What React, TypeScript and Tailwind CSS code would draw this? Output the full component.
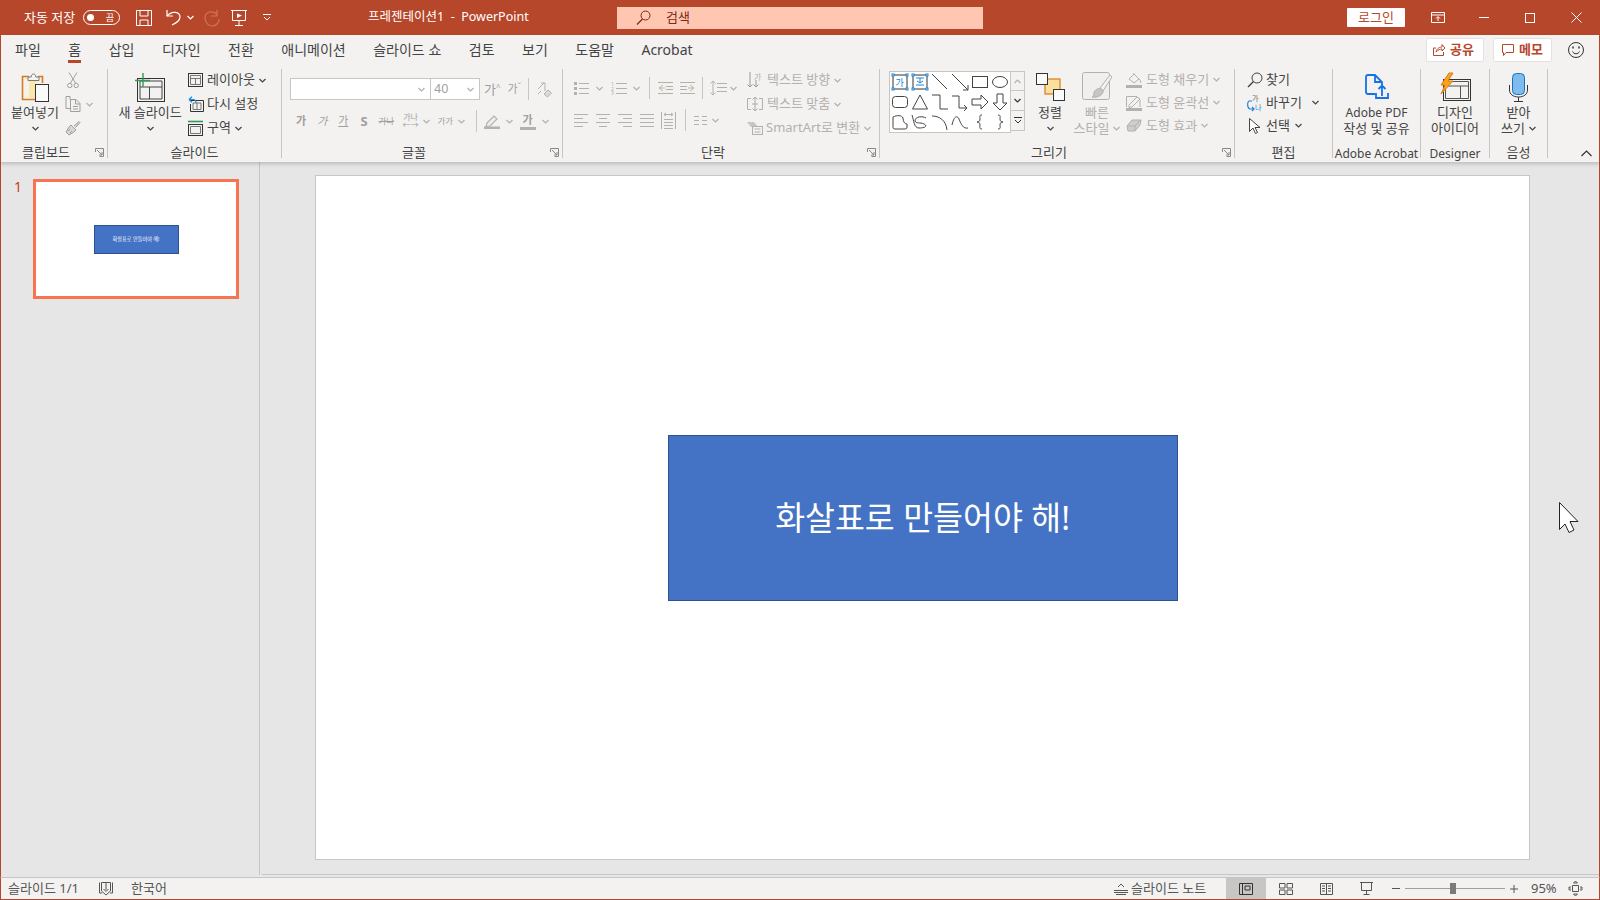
import React from "react";

const K = "#444444";
const D = "#b3b0ad";

type SP = { w: number; h: number; children?: React.ReactNode; s?: string; className?: string };
const S = ({ w, h, children, s = K, className }: SP) => (
  <svg width={w} height={h} viewBox={`0 0 ${w} ${h}`} fill="none" stroke={s} strokeWidth={1} className={`shrink-0 ${className ?? ""}`}>
    {children}
  </svg>
);

const Chev = ({ c = K, className = "" }: { c?: string; className?: string }) => (
  <svg width={7} height={5} viewBox="0 0 7 5" fill="none" stroke={c} strokeWidth={1.2} className={`shrink-0 ${className}`}>
    <path d="M.5 1 L3.5 4 L6.5 1" />
  </svg>
);

const Launcher = () => (
  <svg width={9} height={9} viewBox="0 0 9 9" fill="none" stroke="#8a8886" strokeWidth={1} className="absolute right-[3px] bottom-[1px]">
    <path d="M.5 4V.5H8.5V8.5H4.5M2 2L7 7M7 4V7H4" />
  </svg>
);

const isLatin = (t: string) => /^[A-Za-z ]+$/.test(t);

const Group = ({ w, label, launcher, children }: { w: string; label: string; launcher?: boolean; children?: React.ReactNode }) => (
  <div className={`${w} h-[89px] shrink-0 relative flex flex-col border-r border-[#c8c6c4]`}>
    <div className="h-[80px] flex items-start">{children}</div>
    <div className={`h-[12px] flex items-center justify-center leading-[14px] text-[#444444] whitespace-nowrap ${isLatin(label) ? "text-[12px] pt-[3px]" : "text-[13px]"} ${launcher ? "pr-[16px]" : ""}`}>{label}</div>
    {launcher && <Launcher />}
  </div>
);

const Big = ({ w, icon, lines, chev, off, chevLast }: { w: string; icon: React.ReactNode; lines: string[]; chev?: boolean; off?: boolean; chevLast?: boolean }) => {
  const c = off ? "text-[#b3b0ad]" : "text-[#444444]";
  return (
    <div className={`${w} shrink-0 flex flex-col items-center`}>
      <div className="h-[36px] flex items-center justify-center">{icon}</div>
      {lines.map((l, i) => (
        <div key={i} className={`h-[15.5px] leading-[15.5px] whitespace-nowrap flex items-center ${isLatin(l) ? "text-[12px]" : "text-[13px]"} ${c}`}>
          {l}
          {chevLast && i === lines.length - 1 && <Chev c={off ? D : K} className="ml-[4px]" />}
        </div>
      ))}
      {chev && (
        <div className="h-[16px] flex items-center">
          <Chev />
        </div>
      )}
    </div>
  );
};

const Row = ({ icon, text, off, chev, h = "h-[24px]", gap = "mr-[4px]", chevGap = "ml-[4px]", iw = "w-[15px]" }: { icon?: React.ReactNode; text: string; off?: boolean; chev?: boolean; h?: string; gap?: string; chevGap?: string; iw?: string }) => (
  <div className={`${h} flex items-center whitespace-nowrap text-[13px] ${off ? "text-[#b3b0ad]" : "text-[#444444]"}`}>
    <div className={`${iw} ${gap} flex items-center justify-center shrink-0`}>{icon}</div>
    {text}
    {chev && <Chev c={off ? D : K} className={chevGap} />}
  </div>
);

const Sep = ({ h = "h-[22px]", className = "" }: { h?: string; className?: string }) => <div className={`w-px ${h} bg-[#c8c6c4] shrink-0 ${className}`} />;

const Lines = ({ y, x1 = 0, x2 = 14, c = D }: { y: number[]; x1?: number; x2?: number; c?: string }) => (
  <path d={y.map((v) => `M${x1} ${v + 0.5}H${x2}`).join("")} stroke={c} />
);

const Paste = () => (
  <S w={28} h={31}>
    <path d="M8 4.5H1.5V27.5H16V24" stroke="#d97a1c" strokeWidth={1.6} />
    <path d="M3 6H8V26H15V10H20" fill="#fde6ad" stroke="none" />
    <path d="M17 4.5H21.5V11" stroke="#d97a1c" strokeWidth={1.6} />
    <path d="M7 8.5V5H10.2C10.2 1 14.8 1 14.8 5H18V8.5Z" fill="#f3f2f1" stroke="#7a7a7a" />
    <rect x={14.5} y={12.5} width={13} height={17} fill="#fafafa" stroke="#333" />
  </S>
);
const Cut = () => (
  <S w={12} h={17} s="#a19f9d">
    <path d="M2 .5L8.5 11M10 .5L3.5 11" />
    <circle cx={2.8} cy={13.5} r={2.2} />
    <circle cx={9.2} cy={13.5} r={2.2} />
  </S>
);
const Copy = () => (
  <S w={16} h={16} s="#a19f9d">
    <path d="M5 3.5V.5H1V12.5H5" />
    <path d="M5.5 3.5H11L15 7.5V15.5H5.5ZM10.5 3.5V8H15M8 10.5H13M8 13H13" />
  </S>
);
const Brush = () => (
  <S w={16} h={16} s="#a19f9d">
    <path d="M9 6L14 1.5L15 2.5L10.5 7.5" fill="#d8d6d4" />
    <path d="M6 5L11 10L9 12L4 15L1 12L4 7Z" fill="#d8d6d4" />
    <path d="M5 9L3 11M7 11L5 13" />
  </S>
);
const NewSlide = () => (
  <S w={30} h={30}>
    <rect x={2.5} y={6.5} width={27} height={23} stroke="#333" />
    <path d="M5 9H27V27H5ZM5 15H27M14.5 15V27" />
    <path d="M8 1V15M0 8.5H15" stroke="#2e9b57" strokeWidth={1.4} />
  </S>
);
const Layout = () => (
  <S w={15} h={14}>
    <rect x={.5} y={.5} width={14} height={13} stroke="#333" />
    <path d="M2.5 2.5H12.5V11.5H2.5ZM2.5 5.5H12.5M7.5 5.5V11.5" stroke="#777" />
  </S>
);
const Reset = () => (
  <S w={16} h={16}>
    <path d="M3 4.5H15.5V15.5H2.5V8" stroke="#333" />
    <path d="M5 7H13V13.5H5ZM9 7V13.5" stroke="#777" />
    <path d="M1 3.5L4 .8M1 3.5L4 6.2M1 3.5H5C7 3.5 8 5 8 7" stroke="#1a86d9" strokeWidth={1.2} />
  </S>
);
const Section = () => (
  <S w={15} h={16}>
    <path d="M0 1.5H15" stroke="#2e9b57" strokeWidth={1.6} />
    <rect x={.5} y={4.5} width={14} height={11} stroke="#333" />
    <path d="M2.5 6.5H12.5V13.5H2.5Z" stroke="#777" />
  </S>
);

const FontGlyph = ({ children, cls = "", size = "text-[11px]" }: { children: React.ReactNode; cls?: string; size?: string }) => (
  <span className={`${size} leading-[14px] text-[#a19f9d] shrink-0 whitespace-nowrap ${cls}`}>{children}</span>
);

const ClearFmt = () => (
  <S w={16} h={17} s={D}>
    <path d="M2 8L8 2M5 2H9V10M2 13L5 10" />
    <path d="M8 13L12 9L15.5 12L11.5 16Z" fill="#dcdad8" />
  </S>
);
const Highlight = () => (
  <S w={16} h={15} s={D}>
    <path d="M3 9L10 2L13 5L6 12L2 12.5Z" fill="#eeeded" strokeWidth={1.1} />
    <path d="M0 14H16" strokeWidth={3} stroke="#b3b0ad" />
  </S>
);
const Bullets = () => (
  <S w={15} h={14}>
    <path d="M0 1h3v3H0zM0 6h3v3H0zM0 11h3v3H0z" fill={D} stroke="none" />
    <Lines y={[2, 7, 12]} x1={5} x2={15} />
  </S>
);
const Numbers = () => (
  <S w={16} h={14}>
    <text x={0} y={4.5} fontSize={5} fill={D} stroke="none">1</text>
    <text x={0} y={9.5} fontSize={5} fill={D} stroke="none">2</text>
    <text x={0} y={14} fontSize={5} fill={D} stroke="none">3</text>
    <Lines y={[2, 7, 12]} x1={5} x2={16} />
  </S>
);
const Indent = ({ flip }: { flip?: boolean }) => (
  <S w={15} h={12} className={flip ? "" : "-scale-x-100"}>
    <Lines y={[0, 11]} x1={0} x2={15} />
    <Lines y={[4, 7]} x1={8} x2={15} />
    <path d="M5 3L1 6L5 9M1 6H7" stroke="#bdb6a0" />
  </S>
);
const LineSp = () => (
  <S w={17} h={16}>
    <path d="M3 1V15M.5 3.5L3 1L5.5 3.5M.5 12.5L3 15L5.5 12.5" stroke={D} />
    <Lines y={[3, 7, 11]} x1={7} x2={17} />
  </S>
);
const Align = ({ k }: { k: number }) => {
  const rows = [
    [[0, 14], [0, 9], [0, 14], [0, 9]],
    [[0, 14], [3, 11], [0, 14], [3, 11]],
    [[0, 14], [5, 14], [0, 14], [5, 14]],
    [[0, 14], [0, 14], [0, 14], [0, 14]],
  ][k];
  return (
    <S w={14} h={13} s={D}>
      {rows.map((r, i) => (
        <path key={i} d={`M${r[0]} ${i * 4 + 0.5}H${r[1]}`} />
      ))}
    </S>
  );
};
const Distribute = () => (
  <S w={15} h={17} s={D}>
    <path d="M.5 0V17M14.5 0V17M3 2.5H12M3 2.5L5 1M3 2.5L5 4M12 2.5L10 1M12 2.5L10 4M3 7.5H12M3 10.5H12M3 13.5H12M3 16.5H12" />
  </S>
);
const Cols = () => (
  <S w={13} h={9} s={D}>
    <path d="M0 .5H5M0 4.5H5M0 8.5H5M8 .5H13M8 4.5H13M8 8.5H13" />
  </S>
);
const TextDir = () => (
  <S w={16} h={17} s={D} className="overflow-visible">
    <path d="M3 0V15M.5 12.5L3 15L5.5 12.5M9 8V15M6.5 12.5L9 15L11.5 12.5" stroke="#999" />
    <text x={7} y={8} fontSize={8} fill={D} stroke="none">가</text>
  </S>
);
const TextFit = () => (
  <S w={16} h={16} s={D}>
    <path d="M4 2.5H.5V13.5H4M12 2.5H15.5V13.5H12" />
    <path d="M8 1V15M5.5 3.5L8 1L10.5 3.5M5.5 12.5L8 15L10.5 12.5M5 8H11" stroke="#aaa" />
  </S>
);
const SmartArt = () => (
  <S w={16} h={14} s={D}>
    <path d="M0 1H7L11 6H4Z" fill="#c8c6c4" stroke="none" />
    <rect x={5.5} y={5.5} width={10} height={8} fill="#f3f2f1" />
    <path d="M7.5 8H13.5M7.5 11H13.5" />
  </S>
);

const Sh = ({ children }: { children: React.ReactNode }) => (
  <div className="w-[20px] h-[20px] flex items-center justify-center">
    <S w={18} h={18}>{children}</S>
  </div>
);
const Handles = () => (
  <g fill="#ffffff" stroke="#1a86d9">
    <rect x={1} y={1} width={2} height={2} />
    <rect x={15} y={1} width={2} height={2} />
    <rect x={1} y={15} width={2} height={2} />
    <rect x={15} y={15} width={2} height={2} />
  </g>
);
const Gallery = () => (
  <div className="grid grid-cols-6 w-[122px] h-[62px] content-center bg-white border border-[#c8c6c4] shrink-0">
    <Sh>
      <path d="M2 2H16V16H2Z" stroke="#333" />
      <Handles />
      <text x={4.5} y={13} fontSize={9} fill="#1a86d9" stroke="none">가</text>
    </Sh>
    <Sh>
      <path d="M2 2H16V16H2Z" stroke="#333" />
      <Handles />
      <path d="M5 5H13M9 5V10M5 12H13M6 8L9 10L12 8" stroke="#1a86d9" />
    </Sh>
    <Sh><path d="M1 1L16 16" /></Sh>
    <Sh><path d="M1 1L17 17M12 17H17V12" /></Sh>
    <Sh><rect x={1.5} y={3.5} width={15} height={11} /></Sh>
    <Sh><ellipse cx={9} cy={9} rx={7.5} ry={5.5} /></Sh>
    <Sh><rect x={1.5} y={3.5} width={15} height={11} rx={3} /></Sh>
    <Sh><path d="M9 2L16.5 16H1.5Z" /></Sh>
    <Sh><path d="M1 2H9V16H17" /></Sh>
    <Sh><path d="M1 3H8V15H16M13 12L16 15L13 18" /></Sh>
    <Sh><path d="M1 6H10V2L17 9L10 16V12H1Z" /></Sh>
    <Sh><path d="M6 1H12V10H16L9 17L2 10H6Z" /></Sh>
    <Sh><path d="M2 4C6 2 11 2 12 5C12 9 14 11 16 11V14C16 16 15 16 13 16H4C2 16 2 15 2 13Z" /></Sh>
    <Sh><path d="M1 2C3 8 3 15 8 15C14 15 17 13 13 11C9 9 5 11 4 8C4 3 12 3 15 5" /></Sh>
    <Sh><path d="M1 3C8 3 15 7 16 17" /></Sh>
    <Sh><path d="M1 12C3 3 6 2 8 6C10 11 12 16 17 15" /></Sh>
    <Sh><path d="M11 2C8 2 9 4 9 6C9 8 8 9 6 9C8 9 9 10 9 12C9 14 8 16 11 16" /></Sh>
    <Sh><path d="M7 2C10 2 9 4 9 6C9 8 10 9 12 9C10 9 9 10 9 12C9 14 10 16 7 16" /></Sh>
  </div>
);
const Scroll = ({ kind }: { kind: number }) => (
  <div className={`h-[20px] w-[14px] flex items-center justify-center border-r border-b border-[#c8c6c4] ${kind === 0 ? "border-t" : ""}`}>
    {kind === 0 && <svg width={7} height={5} viewBox="0 0 7 5" fill="none" stroke={D} strokeWidth={1.2}><path d="M.5 4L3.5 1L6.5 4" /></svg>}
    {kind === 1 && <Chev c="#333" />}
    {kind === 2 && <svg width={8} height={7} viewBox="0 0 8 7" fill="none" stroke="#333"><path d="M0 .5H8M1 3L4 6L7 3" /></svg>}
  </div>
);
const Arrange = () => (
  <S w={29} h={28}>
    <rect x={9} y={6} width={15} height={15} fill="#fbdf9d" stroke="#d97a1c" strokeWidth={1.2} />
    <rect x={.5} y={.5} width={11} height={11} fill="#fafafa" stroke="#333" />
    <rect x={17.5} y={16.5} width={11} height={11} fill="#fafafa" stroke="#333" />
  </S>
);
const QuickStyle = () => (
  <S w={31} h={30} s={D}>
    <rect x={.5} y={.5} width={27} height={27} rx={2} fill="#f0efee" />
    <path d="M18 16L28 3L30 5L21 19Z" fill="#f3f2f1" />
    <path d="M12 20C16 14 22 17 21 20C20 24 14 26 10 25C12 24 12 22 12 20Z" fill="#c8c6c4" />
  </S>
);
const Fill = () => (
  <S w={16} h={16} s={D}>
    <path d="M3 7L8 2L13 7L8 11Z" fill="#f3f2f1" />
    <path d="M8 2V1M13 7C15 8 15 10 14 11" />
    <path d="M0 14.5H16" stroke="#b3b0ad" strokeWidth={3} />
  </S>
);
const Outline = () => (
  <S w={16} h={16} s={D}>
    <path d="M.5 12V1.5H11M14 5V12" />
    <path d="M3 10L11 2L14 4L6 12L3 12.5Z" fill="#f3f2f1" />
    <path d="M0 14.5H16" stroke="#b3b0ad" strokeWidth={3} />
  </S>
);
const Effect = () => (
  <S w={16} h={13} s={D}>
    <path d="M1 7L6 1H15L14 6L9 12H2Z" fill="#d0cecc" />
    <path d="M1 7H9L14 1M9 7V12" />
  </S>
);
const Find = () => (
  <S w={16} h={16}>
    <circle cx={10} cy={6} r={5} />
    <path d="M6.5 9.5L1 15" strokeWidth={1.4} />
  </S>
);
const Replace = () => (
  <S w={17} h={18} className="overflow-visible">
    <text x={5} y={7} fontSize={7} fill="#666" stroke="none">가</text>
    <text x={8} y={16} fontSize={7} fill="#1a86d9" stroke="none">나</text>
    <path d="M5 7H2C0 8 0 14 3 15H7M5 13L7 15L5 17" stroke="#1a86d9" strokeWidth={1.2} />
  </S>
);
const Select = () => (
  <S w={12} h={16}>
    <path d="M.5 .5V13.5L4 10L6.5 15.5L8.5 14.5L6 9.5H11Z" fill="#fff" />
  </S>
);
const AdobeIcon = () => (
  <S w={24} h={26} s="#1473e6">
    <path d="M10 20H3C1.5 20 1 19 1 18V3C1 2 1.5 1 3 1H10L17 8V11" strokeWidth={1.8} />
    <path d="M10 1V8H17" strokeWidth={1.8} />
    <path d="M17 12V22M13.5 15L17 11.5L20.5 15" strokeWidth={1.8} />
    <path d="M11 19V24H23V19" strokeWidth={1.8} />
  </S>
);
const DesignerIcon = () => (
  <S w={31} h={28} className="overflow-visible">
    <rect x={3.5} y={6.5} width={27} height={21} stroke="#333" />
    <path d="M5.5 8.5H28.5V25.5H5.5Z M5.5 13H28.5M20.5 13V25.5" stroke="#555" />
    <path d="M9 0L1 12H5L1 21L13 8H8L13 0Z" fill="#f7a41d" stroke="#d97a1c" />
  </S>
);
const Mic = () => (
  <S w={19} h={29}>
    <rect x={3.5} y={.5} width={12} height={21} rx={4} fill="#7fbcec" stroke="#1473c6" />
    <path d="M.5 12V17C.5 21 4 24 9.5 24C15 24 18.5 21 18.5 17V12M9.5 24V28M5 28.5H14" stroke="#333" />
  </S>
);

export default function App() {
  return (
    <div className="relative w-[1600px] h-[900px] overflow-hidden flex flex-col bg-[#e6e6e6] font-['Noto_Sans','Noto_Sans_CJK_KR',sans-serif]">
      {/* Title bar */}
      <div className="h-[35px] shrink-0 bg-[#b7472a] flex items-center text-white text-[12.5px]">
        <div className="w-[368px] shrink-0 flex items-center pl-[24px]">
          <span className="w-[59px] text-[13px] whitespace-nowrap">자동 저장</span>
          <div className="w-[37px] h-[15px] rounded-full border border-white flex items-center justify-between pl-[3px] pr-[5px]">
            <div className="w-[7px] h-[7px] rounded-full bg-white" />
            <span className="text-[9px] leading-[10px]">끔</span>
          </div>
          <S w={16} h={16} s="#fff" className="ml-[16px]">
            <path d="M.5 .5H15.5V15.5H.5ZM4 .5V6H12V.5M4 15.5V10H12V15.5" />
          </S>
          <S w={18} h={17} s="#fff" className="ml-[13px]">
            <path d="M2 1V7H8" strokeWidth={1.2} />
            <path d="M2 7C7 1 15 3 15 8C15 12 11 14 7 16" strokeWidth={1.2} />
          </S>
          <Chev c="#fff" className="ml-[4px]" />
          <S w={18} h={18} s="#cf7358" className="ml-[9px]">
            <path d="M14 1V7H8M14 6C11 1 2 2 2 9C2 14 6 17 9 17C13 17 16 14 16 10" strokeWidth={1.2} />
          </S>
          <S w={16} h={16} s="#fff" className="ml-[10px]">
            <path d="M0 .5H16M1.5 .5V10.5H14.5V.5M8 10.5V15M4 15.5H12" />
            <path d="M6 3.5L11 5.5L6 8Z" fill="#fff" stroke="none" />
          </S>
          <svg width={8} height={7} viewBox="0 0 8 7" fill="none" stroke="#fff" className="ml-[16px]">
            <path d="M0 .5H8M1 3L4 6L7 3" />
          </svg>
        </div>
        <div className="w-[249px] shrink-0 whitespace-nowrap">프레젠테이션1&nbsp; - &nbsp;PowerPoint</div>
        <div className="w-[366px] h-[22px] shrink-0 bg-[#ffc7b2] flex items-center pl-[19px] text-[#7d2a14]">
          <S w={15} h={15} s="#7d2a14">
            <circle cx={9.5} cy={5.5} r={4.5} />
            <path d="M6.5 9L1 14.5" strokeWidth={1.2} />
          </S>
          <span className="ml-[15px] text-[13px]">검색</span>
        </div>
        <div className="ml-[364px] w-[58px] h-[19px] shrink-0 bg-white rounded-[1px] flex items-center justify-center text-[#b7472a] text-[13px]">로그인</div>
        <S w={14} h={11} s="#fff" className="ml-[26px]">
          <path d="M.5 .5H13.5V10.5H.5ZM.5 3H13.5M7 9V5M5 6.5L7 4.5L9 6.5" />
        </S>
        <div className="w-[10px] h-px bg-white ml-[34px]" />
        <div className="w-[10px] h-[10px] border border-white ml-[36px]" />
        <S w={11} h={11} s="#fff" className="ml-[36px]">
          <path d="M.5 .5L10.5 10.5M10.5 .5L.5 10.5" />
        </S>
      </div>

      {/* Ribbon */}
      <div className="h-[127px] shrink-0 bg-[#f3f2f1] border-l border-r border-[#b7472a] flex flex-col relative z-10 shadow-[0_2px_4px_rgba(0,0,0,0.18)]">
        <div className="h-[30px] flex items-start pl-[14px] pr-[15px] gap-[27.5px] text-[14px] text-[#444444] whitespace-nowrap">
          {["파일", "홈", "삽입", "디자인", "전환", "애니메이션", "슬라이드 쇼", "검토", "보기", "도움말", "Acrobat"].map((t) => (
            <div key={t} className={`h-[28px] pt-[4px] flex items-center border-b-[3px] ${t === "홈" ? "border-[#b7472a]" : "border-transparent"}`}>
              {t}
            </div>
          ))}
          <div className="ml-auto flex items-center gap-[9px] pt-[3px]">
            <div className="w-[58px] h-[24px] bg-white border border-[#e5e3e1] rounded-[2px] flex items-center pl-[6px] text-[#b7472a] text-[13px] font-bold">
              <S w={12} h={12} s="#b7472a">
                <path d="M3 4H.5V11.5H10.5V8M3 8C4 4 7 3 9 3V.5L12 4L9 7V5C7 5 5 6 3 8Z" />
              </S>
              <span className="ml-[5px]">공유</span>
            </div>
            <div className="w-[59px] h-[24px] bg-white border border-[#e5e3e1] rounded-[2px] flex items-center pl-[8px] text-[#b7472a] text-[13px] font-bold">
              <S w={12} h={12} s="#b7472a">
                <path d="M.5 .5H11.5V8.5H4L1.5 11.5V8.5H.5Z" />
              </S>
              <span className="ml-[5px]">메모</span>
            </div>
            <S w={16} h={16} s="#333" className="ml-[7px]">
              <circle cx={8} cy={8} r={7.5} />
              <path d="M4.5 9.5C6 12.5 10 12.5 11.5 9.5" />
              <path d="M5 4.5V6.5M11 4.5V6.5" strokeWidth={1.5} />
            </S>
          </div>
        </div>

        <div className="flex mt-[4px]">
          {/* Clipboard */}
          <Group w="w-[107px]" label="클립보드" launcher>
            <Big w="w-[54px] ml-[7px]" icon={<Paste />} lines={["붙여넣기"]} chev />
            <div className="ml-[3px] -mt-px">
              <Row iw="w-[16px]" gap="mr-0" text="" icon={<Cut />} />
              <Row iw="w-[16px]" gap="mr-0" text="" icon={<Copy />} off chev chevGap="ml-[5px]" />
              <Row iw="w-[16px]" gap="mr-0" text="" icon={<Brush />} />
            </div>
          </Group>

          {/* Slides */}
          <Group w="w-[174px]" label="슬라이드">
            <Big w="w-[64px] ml-[10px]" icon={<NewSlide />} lines={["새 슬라이드"]} chev />
            <div className="ml-[6px] -mt-px">
              <Row icon={<Layout />} text="레이아웃" chev />
              <Row icon={<Reset />} text="다시 설정" />
              <Row icon={<Section />} text="구역" chev />
            </div>
          </Group>

          {/* Font */}
          <Group w="w-[281px]" label="글꼴" launcher>
            <div className="pl-[8px] pt-[9px] flex flex-col">
              <div className="flex items-center h-[22px]">
                <div className="w-[141px] h-[22px] bg-white border border-[#c8c6c4] flex items-center justify-end pr-[5px]">
                  <Chev c={D} />
                </div>
                <div className="w-[49px] h-[22px] bg-white border border-l-0 border-[#c8c6c4] flex items-center justify-between px-[3px] text-[12.5px] text-[#a19f9d]">
                  40
                  <Chev c={D} className="mr-[2px]" />
                </div>
                <FontGlyph size="text-[13px]" cls="ml-[4px]">가</FontGlyph>
                <FontGlyph size="text-[8px]" cls="-mt-[4px]">^</FontGlyph>
                <FontGlyph cls="ml-[7px]">가</FontGlyph>
                <FontGlyph size="text-[8px]" cls="-mt-[4px]">ˇ</FontGlyph>
                <Sep className="ml-[7px]" />
                <div className="ml-[7px]"><ClearFmt /></div>
              </div>
              <div className="flex items-center h-[22px] mt-[10px] pl-[6px]">
                <FontGlyph cls="font-bold">가</FontGlyph>
                <FontGlyph cls="italic ml-[11px]">가</FontGlyph>
                <FontGlyph cls="underline ml-[11px]">가</FontGlyph>
                <FontGlyph size="text-[13px]" cls="font-bold ml-[12px]">S</FontGlyph>
                <FontGlyph size="text-[8.5px]" cls="line-through ml-[11px] w-[16px]">가나</FontGlyph>
                <div className="ml-[8px] w-[16px] flex flex-col items-center">
                  <span className="text-[8px] leading-[8px] text-[#a19f9d] whitespace-nowrap">가나</span>
                  <span className="text-[8px] leading-[8px] text-[#a19f9d] whitespace-nowrap">←→</span>
                </div>
                <Chev c={D} className="ml-[4px]" />
                <FontGlyph size="text-[8.5px]" cls="ml-[8px] w-[16px]">가가</FontGlyph>
                <Chev c={D} className="ml-[4px]" />
                <Sep className="ml-[11px]" />
                <div className="ml-[7px]"><Highlight /></div>
                <Chev c={D} className="ml-[6px]" />
                <div className="ml-[7px] w-[16px] h-[17px] flex flex-col items-center">
                  <span className="text-[11px] leading-[13px] font-bold text-[#a19f9d]">가</span>
                  <div className="w-[16px] h-[3px] bg-[#b3b0ad] mt-[1px]" />
                </div>
                <Chev c={D} className="ml-[6px]" />
              </div>
            </div>
          </Group>

          {/* Paragraph */}
          <Group w="w-[317px]" label="단락" launcher>
            <div className="w-[184px] shrink-0 pl-[11px] pt-[8px] flex flex-col">
              <div className="flex items-center h-[22px]">
                <Bullets />
                <Chev c={D} className="ml-[7px]" />
                <div className="ml-[8px]"><Numbers /></div>
                <Chev c={D} className="ml-[6px]" />
                <Sep className="ml-[9px]" />
                <div className="ml-[8px]"><Indent flip /></div>
                <div className="ml-[7px]"><Indent /></div>
                <Sep className="ml-[7px]" />
                <div className="ml-[7px]"><LineSp /></div>
                <Chev c={D} className="ml-[3px]" />
              </div>
              <div className="flex items-center h-[22px] mt-[10px]">
                <Align k={0} />
                <div className="ml-[8px]"><Align k={1} /></div>
                <div className="ml-[8px]"><Align k={2} /></div>
                <div className="ml-[8px]"><Align k={3} /></div>
                <div className="ml-[7px]"><Distribute /></div>
                <Sep className="ml-[9px]" />
                <div className="ml-[8px]"><Cols /></div>
                <Chev c={D} className="ml-[5px]" />
              </div>
            </div>
            <div className="-mt-px">
              <Row iw="w-[16px]" icon={<TextDir />} text="텍스트 방향" off chev />
              <Row iw="w-[16px]" icon={<TextFit />} text="텍스트 맞춤" off chev />
              <Row iw="w-[16px]" gap="mr-[3px]" icon={<SmartArt />} text="SmartArt로 변환" off chev />
            </div>
          </Group>

          {/* Drawing */}
          <Group w="w-[355px]" label="그리기" launcher>
            <div className="ml-[9px] mt-[2px] flex shrink-0">
              <Gallery />
              <div className="flex flex-col">
                <Scroll kind={0} />
                <Scroll kind={1} />
                <Scroll kind={2} />
              </div>
            </div>
            <Big w="w-[40px] ml-[5px]" icon={<Arrange />} lines={["정렬"]} chev />
            <Big w="w-[50px] ml-[2px]" icon={<QuickStyle />} lines={["빠른", "스타일"]} off chevLast />
            <div className="ml-[4px] -mt-px">
              <Row h="h-[23px]" iw="w-[16px]" icon={<Fill />} text="도형 채우기" off chev />
              <Row h="h-[23px]" iw="w-[16px]" icon={<Outline />} text="도형 윤곽선" off chev />
              <Row h="h-[23px]" iw="w-[16px]" icon={<Effect />} text="도형 효과" off chev />
            </div>
          </Group>

          {/* Editing */}
          <Group w="w-[98px]" label="편집">
            <div className="pl-[12px] -mt-px">
              <Row h="h-[23px]" iw="w-[16px]" gap="mr-[3px]" icon={<Find />} text="찾기" />
              <Row h="h-[23px]" iw="w-[16px]" gap="mr-[3px]" icon={<Replace />} text="바꾸기" chev chevGap="ml-[10px]" />
              <Row h="h-[23px]" iw="w-[16px]" gap="mr-[3px]" icon={<Select />} text="선택" chev chevGap="ml-[5px]" />
            </div>
          </Group>

          <Group w="w-[88px]" label="Adobe Acrobat">
            <Big w="w-[87px]" icon={<AdobeIcon />} lines={["Adobe PDF", "작성 및 공유"]} />
          </Group>
          <Group w="w-[69px]" label="Designer">
            <Big w="w-[68px]" icon={<DesignerIcon />} lines={["디자인", "아이디어"]} />
          </Group>
          <Group w="w-[58px]" label="음성">
            <Big w="w-[57px]" icon={<Mic />} lines={["받아", "쓰기"]} chevLast />
          </Group>

          <div className="flex-1 h-[89px] flex items-end justify-end pr-[7px] pb-[1px]">
            <svg width={11} height={7} viewBox="0 0 11 7" fill="none" stroke="#333" strokeWidth={1.2}>
              <path d="M.5 6L5.5 1L10.5 6" />
            </svg>
          </div>
        </div>
      </div>

      {/* Main */}
      <div className="flex-1 min-h-0 flex pb-[2px] border-l border-r border-[#b7472a]">
        <div className="w-[259px] shrink-0 border-r border-[#c8c6c4] flex items-start pl-[13px] pt-[17px]">
          <div className="w-[19px] text-[14px] leading-[16px] text-[#c8401e]">1</div>
          <div className="w-[206px] h-[120px] border-[3px] border-[#f4754f] bg-white flex items-center justify-center">
            <div className="w-[85px] h-[29px] bg-[#4472c4] border border-[#2f528f] flex items-center justify-center pt-[1px] text-[5.2px] text-white whitespace-nowrap">
              화살표로 만들어야 해!
            </div>
          </div>
        </div>
        <div className="flex-1 min-w-0 ml-[2px] border-b border-[#c8c6c4] pl-[53px] pt-[13px]">
          <div className="w-[1215px] h-[685px] bg-white border border-[#c8c6c4] flex items-center justify-center">
            <div className="w-[510px] h-[166px] bg-[#4472c4] border border-[#2f528f] flex items-center justify-center pt-[2px] text-[32.5px] text-white whitespace-nowrap">
              화살표로 만들어야 해!
            </div>
          </div>
        </div>
      </div>

      {/* Status bar */}
      <div className="h-[23px] shrink-0 bg-[#f3f2f1] border-t border-[#c8c6c4] border-b border-b-[#b7472a] border-l border-l-[#b7472a] border-r border-r-[#b7472a] flex items-center text-[13px] text-[#555555] whitespace-nowrap">
        <span className="ml-[7px] w-[91px]">슬라이드 1/1</span>
        <S w={14} h={14} s="#555">
          <path d="M2.5 .5H11.5V9L7 13L2.5 9ZM.5 .5V11H3M13.5 .5V11H11M7 .5V8M4.5 7L7 9.5L9.5 7" />
        </S>
        <span className="ml-[18px]">한국어</span>
        <div className="ml-auto flex items-center h-full">
          <S w={14} h={12} s="#555">
            <path d="M0 7.5H14M0 9.5H14M2 11.5H12M4 4L7 1L10 4" />
          </S>
          <span className="ml-[3px] w-[95px]">슬라이드 노트</span>
          <div className="w-[40px] h-full bg-[#c8c6c4] flex items-center justify-center">
            <S w={14} h={12} s="#333">
              <path d="M.5 .5H13.5V11.5H.5ZM3.5 .5V11.5M6 3H11V7H6Z" />
            </S>
          </div>
          <div className="w-[40px] flex items-center justify-center">
            <S w={14} h={12} s="#555">
              <path d="M.5 .5H6V5H.5ZM8 .5H13.5V5H8ZM.5 7H6V11.5H.5ZM8 7H13.5V11.5H8Z" />
            </S>
          </div>
          <div className="w-[40px] flex items-center justify-center">
            <S w={13} h={12} s="#555">
              <path d="M.5 .5H12.5V11.5H.5ZM6.5 .5V11.5M2 3H5M2 5.5H5M2 8H5M8 3H11M8 5.5H11M8 8H11" />
            </S>
          </div>
          <div className="w-[40px] flex items-center justify-center">
            <S w={13} h={13} s="#555">
              <path d="M0 .5H13M1.5 .5V8.5H11.5V.5M6.5 8.5V12.5M3.5 12.5H9.5" />
            </S>
          </div>
          <div className="ml-[6px] w-[8px] h-px bg-[#555555]" />
          <div className="ml-[5px] w-[100px] h-px bg-[#a19f9d] flex items-center pl-[45px]">
            <div className="w-[6px] h-[11px] bg-[#7a7a7a]" />
          </div>
          <S w={8} h={8} s="#555" className="ml-[5px]">
            <path d="M0 4H8M4 0V8" />
          </S>
          <span className="ml-[13px] w-[37px]">95%</span>
          <S w={15} h={15} s="#555" className="mr-[16px]">
            <path d="M4.5 4.5H10.5V10.5H4.5ZM7.5 0L5.5 2H9.5ZM7.5 15L5.5 13H9.5ZM0 7.5L2 5.5V9.5ZM15 7.5L13 5.5V9.5Z" />
          </S>
        </div>
      </div>

      {/* Mouse pointer */}
      <svg width={20} height={31} viewBox="0 0 20 31" className="absolute left-[1559px] top-[502px] z-20">
        <path d="M.5 .5V27.5L6 22L10 30.5L15 28L11 19.5H19Z" fill="#fff" stroke="#222" />
      </svg>
    </div>
  );
}
